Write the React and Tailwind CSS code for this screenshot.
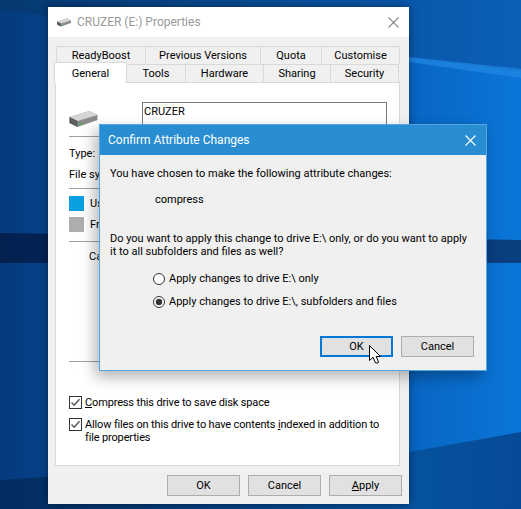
const ui = '[font-family:"Roboto","Noto_Sans",sans-serif]'

function Wallpaper() {
  return (
    <svg className="absolute inset-0" width="521" height="509" viewBox="0 0 521 509">
      <defs>
        <linearGradient id="wall" x1="0" y1="0" x2="1" y2="0">
          <stop offset="0" stopColor="#053a7c" />
          <stop offset="0.1" stopColor="#064289" />
          <stop offset="0.78" stopColor="#0865c2" />
          <stop offset="1" stopColor="#0a76d8" />
        </linearGradient>
        <linearGradient id="upper" x1="0" y1="0" x2="1" y2="0">
          <stop offset="0" stopColor="#06386f" />
          <stop offset="0.8" stopColor="#0a58ac" />
          <stop offset="1" stopColor="#0b5fb6" />
        </linearGradient>
        <linearGradient id="lower" x1="0" y1="0" x2="1" y2="0">
          <stop offset="0" stopColor="#032c60" />
          <stop offset="0.8" stopColor="#06529f" />
          <stop offset="1" stopColor="#054a96" />
        </linearGradient>
        <linearGradient id="band" x1="0" y1="0" x2="1" y2="0">
          <stop offset="0" stopColor="#03204f" />
          <stop offset="1" stopColor="#0a3f80" />
        </linearGradient>
      </defs>
      <rect width="521" height="509" fill="url(#wall)" />
      <polygon points="0,0 521,0 521,72 410,58 0,10" fill="url(#upper)" />
      <polygon points="409,57 521,69 521,78 409,62" fill="#2189e4" opacity="0.7" />
      <polygon points="0,233 521,240 521,263 0,263" fill="url(#band)" />
      <polygon points="0,480 409,452 521,432 521,509 0,509" fill="url(#lower)" />
    </svg>
  )
}

function DriveIcon({ w, h }) {
  return (
    <svg width={w} height={h} viewBox="0 0 28 18">
      <polygon points="0,7 20,1 28,5 28,10 8,17 0,13" fill="#8b8b8b" />
      <polygon points="0,7 20,1 28,5 8,11" fill="#d6d6d6" />
      <polygon points="0,7 8,11 8,17 0,13" fill="#5c5c5c" />
      <rect x="9.5" y="13" width="3" height="1.5" fill="#35b54a" />
    </svg>
  )
}

function CloseX({ color }) {
  return (
    <svg width="11" height="11" viewBox="0 0 11 11">
      <path d="M0.5 0.5L10.5 10.5M10.5 0.5L0.5 10.5" stroke={color} strokeWidth="1.1" fill="none" />
    </svg>
  )
}

function Tab({ label, width, className = '' }) {
  return (
    <div
      className={`flex items-center justify-center border border-b-0 border-[#d9d9d9] bg-[#f0f0f0] -ml-px first:ml-0 ${width} ${className}`}
    >
      {label}
    </div>
  )
}

function Button({ children, focused }) {
  return (
    <div
      className={`flex h-[21px] w-[73px] items-center justify-center bg-[#e1e1e1] ${
        focused ? 'border-2 border-[#0078d7]' : 'border border-[#adadad]'
      }`}
    >
      {children}
    </div>
  )
}

function Check({ children, className = '' }) {
  return (
    <div className={`flex items-start gap-[3px] ${className}`}>
      <svg className="shrink-0" width="13" height="13" viewBox="0 0 13 13">
        <rect x="0.5" y="0.5" width="12" height="12" fill="#fff" stroke="#333" />
        <path d="M2.5 6.5L5.2 9.2L10.5 3.2" stroke="#555" strokeWidth="1.4" fill="none" />
      </svg>
      <div className="whitespace-nowrap tracking-[-0.15px]">{children}</div>
    </div>
  )
}

function Radio({ checked, children }) {
  return (
    <div className="flex items-center gap-[4px]">
      <svg width="12" height="12" viewBox="0 0 12 12">
        <circle cx="6" cy="6" r="5.5" fill="#fff" stroke="#333" />
        {checked && <circle cx="6" cy="6" r="3.2" fill="#333" />}
      </svg>
      <span>{children}</span>
    </div>
  )
}

function PropertiesWindow() {
  return (
    <div className="absolute left-[48px] top-[7px] flex h-[497px] w-[361px] flex-col bg-[#f0f0f0] shadow-[0_0_8px_rgba(0,0,0,0.45)]">
      <div className="flex h-[30px] items-center bg-white pl-[9px] pr-[10px] text-[12px] text-[#999]">
        <DriveIcon w={14} h={9} />
        <span className="ml-[6px] flex-1">CRUZER (E:) Properties</span>
        <CloseX color="#8a8a8a" />
      </div>

      {/* 两排标签页 */}
      <div className="mt-[9px] flex h-[18px] pl-[8px]">
        <Tab label="ReadyBoost" width="w-[90px]" />
        <Tab label="Previous Versions" width="w-[116px]" />
        <Tab label="Quota" width="w-[62px]" />
        <Tab label="Customise" width="w-[79px]" />
      </div>
      <div className="relative flex h-[18px] pl-[79px]">
        <div className="absolute left-[6px] top-[-2px] z-10 flex h-[21px] w-[73px] items-center justify-center border border-b-0 border-[#d9d9d9] bg-white">
          General
        </div>
        <Tab label="Tools" width="w-[60px]" />
        <Tab label="Hardware" width="w-[79px]" />
        <Tab label="Sharing" width="w-[68px]" />
        <Tab label="Security" width="w-[69px]" />
      </div>

      <div className="ml-[7px] flex h-[384px] w-[345px] flex-col border border-[#d9d9d9] bg-white pl-[13px] pr-[12px]">
        <div className="flex h-[53px] items-start">
          <div className="mt-[27px] w-[73px]">
            <DriveIcon w={29} h={18} />
          </div>
          <div className="mt-[19px] flex h-[24px] flex-1 items-start border border-[#7a7a7a] pl-[1px] pt-[2px]">
            CRUZER
          </div>
        </div>
        <div className="h-px bg-[#a0a0a0]" />
        <div className="mt-[10px]">Type:</div>
        <div className="mt-[8px]">File system:</div>
        <div className="mt-[7px] h-px bg-[#a0a0a0]" />
        <div className="mt-[7px] flex items-center gap-[6px]">
          <div className="h-[15px] w-[15px] bg-[#0aa0e2]" />
          <span>Used space:</span>
        </div>
        <div className="mt-[6px] flex items-center gap-[6px]">
          <div className="h-[15px] w-[15px] bg-[#aeaeae]" />
          <span>Free space:</span>
        </div>
        <div className="mt-[9px] h-px bg-[#a0a0a0]" />
        <div className="mt-[8px] pl-[20px]">Capacity:</div>
        <div className="mt-[98px] h-px bg-[#a0a0a0]" />
        <Check className="mt-[34px]">
          <span className="underline">C</span>ompress this drive to save disk space
        </Check>
        <Check className="mt-[9px]">
          Allow files on this drive to have contents <span className="underline">i</span>ndexed in addition to
          <br />
          file properties
        </Check>
      </div>

      <div className="mt-[9px] flex justify-end gap-[8px] pr-[7px]">
        <Button>OK</Button>
        <Button>Cancel</Button>
        <Button>
          <span>
            <span className="underline">A</span>pply
          </span>
        </Button>
      </div>
    </div>
  )
}

function ConfirmDialog() {
  return (
    <div className="absolute left-[99px] top-[124px] flex h-[247px] w-[388px] flex-col border border-[#55a6e0] bg-[#f0f0f0] shadow-[-4px_6px_14px_rgba(0,0,0,0.3)]">
      <div className="flex h-[30px] items-center justify-between bg-[#288ed1] pl-[8px] pr-[10px] text-[12px] text-white">
        <span>Confirm Attribute Changes</span>
        <CloseX color="#fff" />
      </div>
      <div className="flex flex-1 flex-col pl-[10px] pr-[6px]">
        <div className="mt-[12px]">You have chosen to make the following attribute changes:</div>
        <div className="mt-[13px] pl-[45px]">compress</div>
        <div className="mt-[26px] whitespace-nowrap">
          Do you want to apply this change to drive E:\ only, or do you want to apply
          <br />
          it to all subfolders and files as well?
        </div>
        <div className="mt-[14px] flex flex-col gap-[10px] pl-[43px]">
          <Radio>Apply changes to drive E:\ only</Radio>
          <Radio checked>Apply changes to drive E:\, subfolders and files</Radio>
        </div>
        <div className="mt-[28px] flex justify-end gap-[8px] pr-[6px]">
          <Button focused>OK</Button>
          <Button>Cancel</Button>
        </div>
      </div>
    </div>
  )
}

function Cursor() {
  return (
    <svg className="absolute left-[369px] top-[345px]" width="12" height="19" viewBox="0 0 12 19">
      <path
        d="M0.5 0.5V15.5L4 12.2L6.5 18H8.8L9.5 17L7.2 11.5H11.5Z"
        fill="#fff"
        stroke="#000"
        strokeWidth="1"
      />
    </svg>
  )
}

export default function App() {
  return (
    <div className={`relative h-[509px] w-[521px] overflow-hidden text-[11px] leading-[13px] text-black ${ui}`}>
      <Wallpaper />
      <PropertiesWindow />
      <ConfirmDialog />
      <Cursor />
    </div>
  )
}
